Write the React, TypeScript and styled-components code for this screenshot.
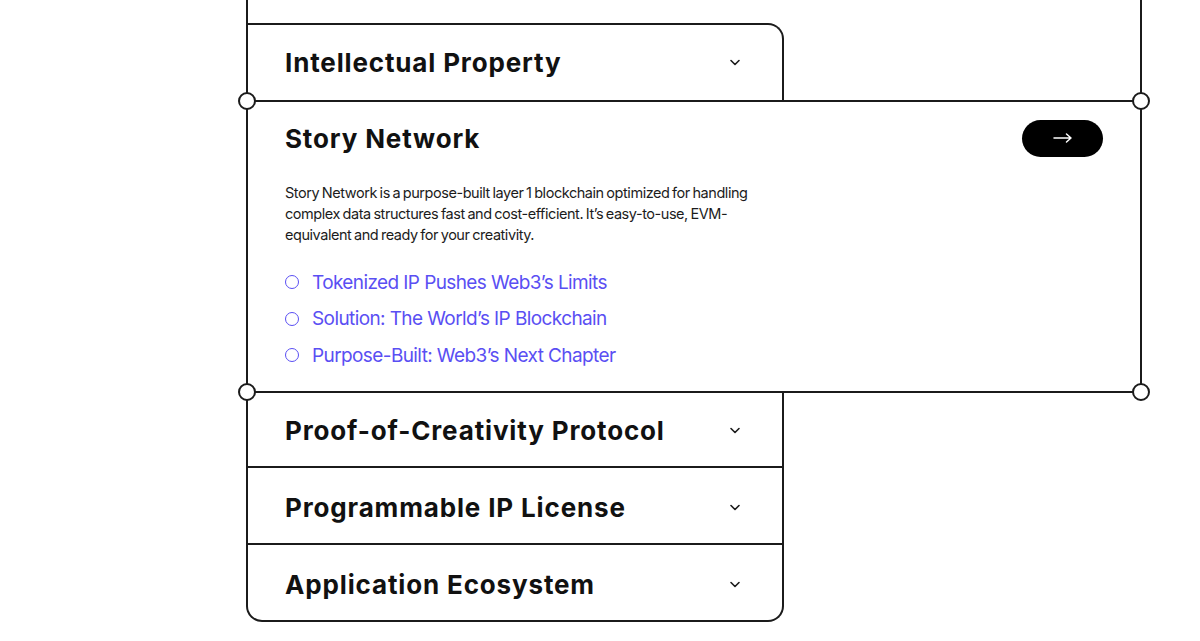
import React, { FC } from 'react';
import styled, { createGlobalStyle } from 'styled-components';

const ink = '#1b1b1b';
const line = `2px solid ${ink}`;
const violet = '#5a4ff3';

const GlobalStyle = createGlobalStyle`
  * { box-sizing: border-box; }
  html, body {
    margin: 0;
    padding: 0;
    background: #ffffff;
    font-family: Inter, "Noto Sans", sans-serif;
    color: ${ink};
  }
`;

const Page = styled.div`
  width: 1200px;
  height: 641px;
  overflow: hidden;
  padding-left: 246px;
`;

const Stage = styled.div`
  width: 896px;
  display: flex;
  flex-direction: column;
`;

const Upper = styled.div`
  border-left: ${line};
  border-right: ${line};
  padding-top: 23px;
`;

const TopCard = styled.div`
  width: 536px;
  height: 77px;
  border-top: ${line};
  border-right: ${line};
  border-top-right-radius: 16px;
`;

const Row = styled.div<{ $divider?: boolean; $height?: number }>`
  height: ${(p) => p.$height ?? 77}px;
  display: flex;
  align-items: center;
  justify-content: space-between;
  padding: ${(p) => (p.$divider === undefined ? '0 40px 3px 37px' : '3px 40px 0 37px')};
  border-bottom: ${(p) => (p.$divider ? line : 'none')};
`;

const Heading = styled.h2`
  margin: 0;
  font-family: Inter, "Noto Sans", sans-serif;
  font-weight: 700;
  font-size: 26px;
  letter-spacing: 0.85px;
  color: #111;
`;

const Chevron = styled.svg`
  width: 14px;
  height: 14px;
  flex: none;
`;

const Expanded = styled.div`
  position: relative;
  height: 293px;
  border: ${line};
  padding: 0 37px 0 37px;
`;

const ExpandedHead = styled.div`
  height: 72px;
  display: flex;
  align-items: center;
  justify-content: space-between;
`;

const GoButton = styled.button`
  width: 81px;
  height: 37px;
  border: none;
  border-radius: 999px;
  background: #000;
  color: #fff;
  display: flex;
  align-items: center;
  justify-content: center;
  cursor: pointer;
`;

const Body = styled.p`
  margin: 8px 0 0;
  width: 480px;
  font-size: 14.5px;
  line-height: 21px;
  letter-spacing: -0.45px;
  word-spacing: -1px;
  color: #1c1c1c;
`;

const Links = styled.ul`
  list-style: none;
  margin: 24px 0 0;
  padding: 0;
  display: flex;
  flex-direction: column;
  gap: 10.5px;
`;

const LinkItem = styled.li`
  display: flex;
  align-items: center;
  gap: 13px;
  height: 26px;
  font-size: 19px;
  letter-spacing: -0.6px;
  color: ${violet};
`;

const Ring = styled.span`
  width: 14px;
  height: 14px;
  border-radius: 50%;
  border: 1.5px solid ${violet};
  flex: none;
`;

const Handle = styled.span<{ $x: 'left' | 'right'; $y: 'top' | 'bottom' }>`
  position: absolute;
  width: 18px;
  height: 18px;
  border-radius: 50%;
  background: #fff;
  border: ${line};
  ${(p) => (p.$x === 'left' ? 'left: -10px;' : 'right: -10px;')}
  ${(p) => (p.$y === 'top' ? 'top: -10px;' : 'bottom: -10px;')}
  z-index: 2;
`;

const Lower = styled.div`
  width: 538px;
  border-left: ${line};
  border-right: ${line};
  border-bottom: ${line};
  border-bottom-left-radius: 16px;
  border-bottom-right-radius: 16px;
  margin-top: -2px;
`;

const ChevronDown: FC = () => (
  <Chevron viewBox="0 0 14 14" fill="none">
    <path d="M3 5.5 7 9.5 11 5.5" stroke="#1b1b1b" strokeWidth="1.6" strokeLinecap="round" strokeLinejoin="round" />
  </Chevron>
);

const ArrowRight: FC = () => (
  <svg width="20" height="12" viewBox="0 0 20 12" fill="none">
    <path d="M1 6h17M13.5 2 18 6l-4.5 4" stroke="#fff" strokeWidth="1.5" strokeLinecap="round" strokeLinejoin="round" />
  </svg>
);

const links = [
  'Tokenized IP Pushes Web3\u2019s Limits',
  'Solution: The World\u2019s IP Blockchain',
  'Purpose-Built: Web3\u2019s Next Chapter',
];

const lowerItems = ['Proof-of-Creativity Protocol', 'Programmable IP License', 'Application Ecosystem'];

export default function App() {
  return (
    <>
      <GlobalStyle />
      <Page>
        <Stage>
          <Upper>
            <TopCard>
              <Row>
                <Heading>Intellectual Property</Heading>
                <ChevronDown />
              </Row>
            </TopCard>
          </Upper>
          <Expanded>
            <Handle $x="left" $y="top" />
            <Handle $x="right" $y="top" />
            <Handle $x="left" $y="bottom" />
            <Handle $x="right" $y="bottom" />
            <ExpandedHead>
              <Heading>Story Network</Heading>
              <GoButton aria-label="Open">
                <ArrowRight />
              </GoButton>
            </ExpandedHead>
            <Body>
              Story Network is a purpose-built layer 1 blockchain optimized for handling complex data structures
              fast and cost-efficient. It&rsquo;s easy-to-use, EVM-equivalent and ready for your creativity.
            </Body>
            <Links>
              {links.map((l) => (
                <LinkItem key={l}>
                  <Ring />
                  {l}
                </LinkItem>
              ))}
            </Links>
          </Expanded>
          <Lower>
            {lowerItems.map((t, i) => (
              <Row key={t} $divider={i < lowerItems.length - 1} $height={i < lowerItems.length - 1 ? 77 : 75}>
                <Heading>{t}</Heading>
                <ChevronDown />
              </Row>
            ))}
          </Lower>
        </Stage>
      </Page>
    </>
  );
}
